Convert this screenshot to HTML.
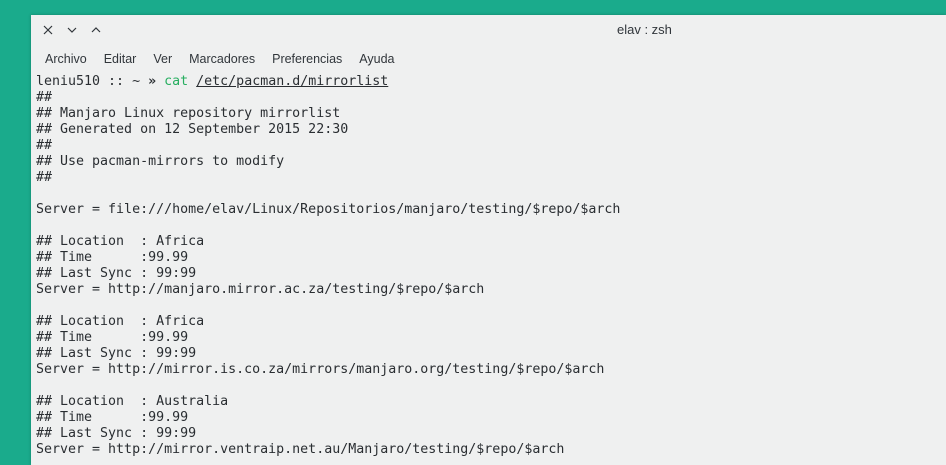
<!DOCTYPE html>
<html><head><meta charset="utf-8"><style>
html,body{margin:0;padding:0;width:946px;height:465px;overflow:hidden;background:#1aab8c;}
.win{position:absolute;left:31px;top:15px;width:915px;height:450px;background:#eff0f0;box-shadow:0 0 3px rgba(0,0,0,.25);}
.tb{position:absolute;top:0;left:0;right:0;height:30px;font:13px "Liberation Sans",sans-serif;color:#31363b;}
.title{position:absolute;left:586px;top:7px;}
.menu{position:absolute;top:37px;left:14px;font:12.5px "Liberation Sans",sans-serif;color:#31363b;}
.menu span{margin-right:17px;}
pre{position:absolute;left:5px;top:59px;margin:0;font:13.3px/16px "DejaVu Sans Mono",monospace;color:#2a2e32;}
.g{color:#27ae60}.u{text-decoration:underline}.b{font-weight:bold}
</style></head><body>
<div class="win">
<div class="tb">
<svg style="position:absolute;left:10px;top:8px" width="70" height="14" viewBox="0 0 70 14" fill="none" stroke="#31363b" stroke-width="1.2">
<path d="M3 3l8 8M11 3l-8 8"/><path d="M27 5l4 4 4-4"/><path d="M51 9l4-4 4 4"/></svg>
<span class="title">elav : zsh</span></div>
<div class="menu"><span>Archivo</span><span>Editar</span><span>Ver</span><span>Marcadores</span><span>Preferencias</span><span>Ayuda</span></div>
<pre>leniu510 :: ~ <span class="b">»</span> <span class="g">cat</span> <span class="u">/etc/pacman.d/mirrorlist</span>
##
## Manjaro Linux repository mirrorlist
## Generated on 12 September 2015 22:30
##
## Use pacman-mirrors to modify
##

Server = file:///home/elav/Linux/Repositorios/manjaro/testing/$repo/$arch

## Location  : Africa
## Time      :99.99
## Last Sync : 99:99
Server = http://manjaro.mirror.ac.za/testing/$repo/$arch

## Location  : Africa
## Time      :99.99
## Last Sync : 99:99
Server = http://mirror.is.co.za/mirrors/manjaro.org/testing/$repo/$arch

## Location  : Australia
## Time      :99.99
## Last Sync : 99:99
Server = http://mirror.ventraip.net.au/Manjaro/testing/$repo/$arch</pre>
</div>
</body></html>
